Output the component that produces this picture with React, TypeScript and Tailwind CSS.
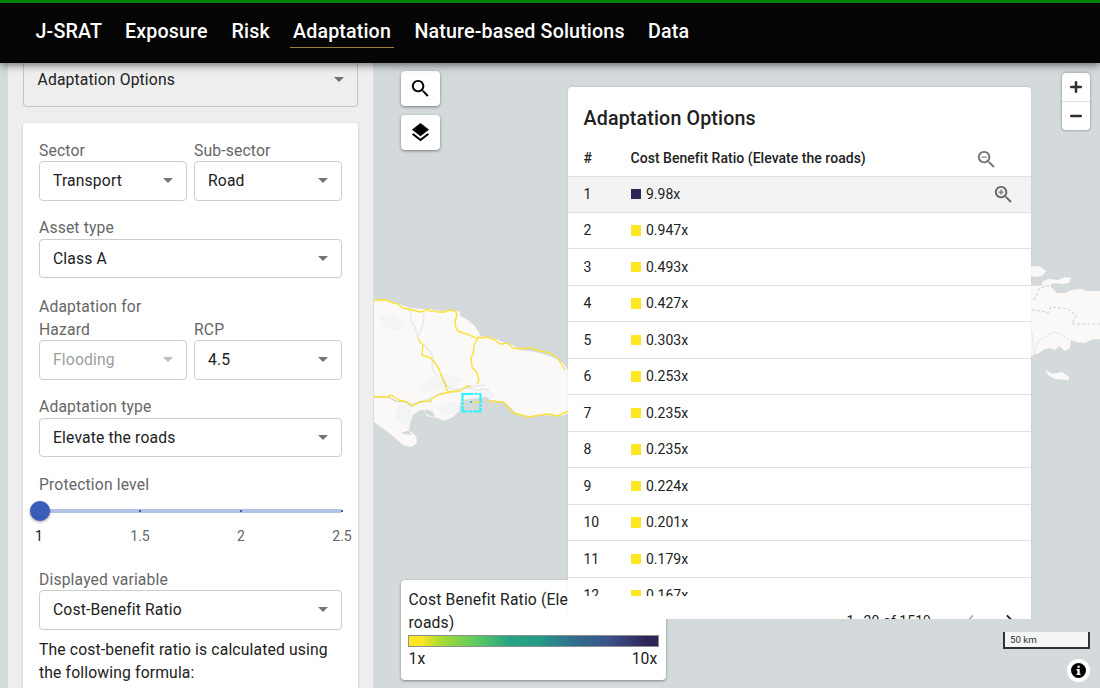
import React from 'react';

const NAV = [
  { label: 'J-SRAT', width: 'w-[66px]' },
  { label: 'Exposure', width: 'w-[83px]' },
  { label: 'Risk', width: 'w-[38px]' },
  { label: 'Adaptation', width: 'w-[98px]', active: true },
  { label: 'Nature-based Solutions', width: 'w-[210px]' },
  { label: 'Data', width: 'w-[41px]' },
];

const ROWS = ['9.98x', '0.947x', '0.493x', '0.427x', '0.303x', '0.253x', '0.235x', '0.235x', '0.224x', '0.201x', '0.179x', '0.167x'];

const ICONS = {
  search:
    'M15.5 14h-.79l-.28-.27C15.41 12.59 16 11.11 16 9.5 16 5.91 13.09 3 9.5 3S3 5.91 3 9.5 5.91 16 9.5 16c1.61 0 3.09-.59 4.23-1.57l.27.28v.79l5 4.99L20.49 19l-4.99-5zm-6 0C7.01 14 5 11.99 5 9.5S7.01 5 9.5 5 14 7.01 14 9.5 11.99 14 9.5 14z',
  layers:
    'M11.99 18.54l-7.37-5.73L3 14.07l9 7 9-7-1.63-1.27-7.38 5.74zM12 16l7.36-5.73L21 9l-9-7-9 7 1.63 1.27L12 16z',
  minus: 'M7 9h5v1H7z',
  plus: 'M12 10h-2v2H9v-2H7V9h2V7h1v2h2v1z',
  left: 'M15.41 7.41L14 6l-6 6 6 6 1.41-1.41L10.83 12z',
  right: 'M10 6L8.59 7.41 13.17 12l-4.58 4.59L10 18l6-6z',
};

function Icon({ d, extra, className }: { d: string; extra?: string; className: string }) {
  return (
    <svg viewBox="0 0 24 24" fill="currentColor" className={className}>
      <path d={d} />
      {extra && <path d={extra} stroke="currentColor" strokeWidth="0.300" />}
    </svg>
  );
}

function Caret({ className = '' }: { className?: string }) {
  return (
    <svg viewBox="0 0 10 5" fill="currentColor" className={`h-[5px] w-[10px] shrink-0 ${className}`}>
      <path d="M0 0h10L5 5z" />
    </svg>
  );
}

function Field({ label, value, disabled, className = '' }: { label: React.ReactNode; value: string; disabled?: boolean; className?: string }) {
  return (
    <div className={`flex flex-col ${className}`}>
      <div className="relative top-[0.500px] text-[#666]">{label}</div>
      <div className="flex h-[39.500px] items-center justify-between rounded border border-[#cdcdcd] pr-[13px] pl-[13px]">
        <span className={disabled ? 'text-[#9e9e9e]' : 'text-[#212121]'}>{value}</span>
        <Caret className={disabled ? 'text-[#bdbdbd]' : 'text-[#757575]'} />
      </div>
    </div>
  );
}

function MapCanvas() {
  return (
    <svg viewBox="0 63 1100 625" className="absolute inset-0 h-[625px] w-[1100px]" fill="none">
      <rect y="63" width="1100" height="625" fill="#d4dadc" />
      <path
        fill="#fbf9f8"
        d="M360 301L374 299.500L386 300L396 303L402 305L410 308L421 309L430 309L441 311L454 310L460 312L460 316L466 319L475 326L479 333L480 336L494 338L503 342L514 346L520 350L530 351L540 353L552 357L562 362L568 370L572 380L572 412L561 416L541 415L530 417L516 413L508 405L504 402L491 400L480 402L462 400L460 410L453 417L444 421L437 418L427 416L425 410L420 410L413 415L410 424L409 430L416 436L417 443L411 447L403 445L394 437L384 429L374 422L360 416Z"
      />
      <path fill="#f3f4f4" d="M381 316l12-1 11 8-1 7-8 1-13-7zM419 388l14-11 13-3 11 5 1 6-12 7-7-4-18 6zM445 380l9-4 10 2-5 5-12-1zM397 405l13-2 2 13-3 9-8-1-6-9zM435 407l15-6 11 3-5 9-12 3zM463 394l18-6 13 4-1 6-28 1z" />
      <path fill="#d4dadc" d="M426 409l7 3 2 5-5-1-4-3zM401 433l9-3 1 5-7-1zM461 400l26-3 3 3-8 3-18 8-5-1z" />
      <g stroke="#e7e9eb" strokeWidth="1.500">
        <path d="M410 309l1 12 4 6 3 10M424 313l-1 12-5 12M423 344l6 6 4 7-1 11 5 8M408 405l18-5 15-7 13-1 14-5 18-2M445 385l8 5 16-2 8 2 12-1" />
      </g>
      <g stroke="#d2cda8" strokeWidth="1.100">
        <path d="M374 397l14 0 8 4 10 1 6 4 8-4 12-1M440 373l7 14" />
      </g>
      <g stroke="#fae13a" strokeWidth="1.400" strokeLinejoin="round">
        <path d="M373 301l6-1 7 0 8 3 4 1 5 4 9 2 9 2 3-1 2-2 4 2 5 0 3 1 7 0 4-2 6 1 2 3-2 8 1 6 2 3 5 2 4 1 7 3 3 2 2-2 3 1 5-1 8 3 5 4 2 0 5-1 6 5 10 1 5-1 5 0 6 3 6 1 5 1 7 4 3 5 5 8" />
        <path d="M478 337l-4 9-1 8-2 4 1 9 5 6 2 7-2 4" />
        <path d="M418 338l2 4 3 3-1 10 9 3 4 5 4 6 4 11 4 10 3 3" />
        <path d="M373 396l6 1 8 0 4-2 8 5 8 2 6 4 6-4 10-1 9-6 12-3 10-1 7-5 4 0M488 401l15 1 5 5 5 6 9 2 6 2 13-2 8-1 9 2 10-5M473 402l9 0" />
      </g>
      <rect x="462.500" y="394" width="18" height="17.500" stroke="#2ef3fb" strokeWidth="2.200" strokeDasharray="11 1 3 1" />
      <rect x="470" y="401" width="2" height="2" fill="#31c8ef" />
      <g fill="#fbf9f8">
        <path d="M1025 267l14-1 7 5-4 5-8 1-9-3zM1042 282l6-3 10 1 7-3 6 1-2 5-8 1-6-1-7 2-6 0zM1020 284l15 2 15-1 4 5 2 3 9 0 7-3 9-1 7 2 12 0v48l-9 1-6 3-9-1-5-2-1 8-5 3-6-5-4 4-6-2-6 2-4 3-6 2-8 6H1020z" />
        <path d="M1045 370l8 4 9-2 3 2 4 3v3l-14-1-7-4z" />
      </g>
      <g stroke="#d1d4d7" strokeWidth="1.200" strokeDasharray="3 2">
        <path d="M1034 300l5-11 8-3 6 2M1032 310l10 1 6 2 3-6 17 2 8 7-4 8 28 0" />
      </g>
      <path stroke="#e4e6e8" d="M1032 333l2 21 4-13 9-5 7-4 9 3 6 6" />
    </svg>
  );
}

function Sidebar() {
  return (
    <aside className="relative ml-[7px] flex h-full w-[367px] shrink-0 flex-col overflow-hidden border-x border-[#dcdcdc] bg-[#eee] pr-[15px] pl-[15px] text-[15.7px] leading-[23px] tracking-[0.15px]">
      <div className="flex h-[44px] shrink-0 items-start justify-between rounded-b border border-t-0 border-[#c6c6c6] pr-[13px] pl-[13.500px] pt-[5px] text-[#212121]">
        <span>Adaptation Options</span>
        <Caret className="mt-[9px] text-[#6f6f6f]" />
      </div>
      <div className="mt-[16px] flex shrink-0 flex-col rounded-t bg-white px-4 pt-[15px] pb-10 shadow-[0_1px_3px_rgba(0,0,0,0.2)]">
        <div className="flex gap-[7px]">
          <Field label="Sector" value="Transport" className="w-[148px]" />
          <Field label="Sub-sector" value="Road" className="w-[148px]" />
        </div>
        <Field label="Asset type" value="Class A" className="mt-[15px]" />
        <div className="mt-[16px] flex items-end gap-[7px]">
          <Field label={<>Adaptation for<br />Hazard</>} value="Flooding" disabled className="w-[148px]" />
          <Field label="RCP" value="4.5" className="w-[148px]" />
        </div>
        <Field label="Adaptation type" value="Elevate the roads" className="mt-[15px]" />
        <div className="mt-[15.500px] text-[#666]">Protection level</div>
        <div className="relative mt-[13px] h-1 rounded-sm bg-[#b1c2e5]">
          <i className="absolute top-[1px] left-[100px] h-[2px] w-[2px] bg-[#3a5bb8]" />
          <i className="absolute top-[1px] left-[201px] h-[2px] w-[2px] bg-[#3a5bb8]" />
          <i className="absolute top-[1px] left-[302px] h-[2px] w-[2px] bg-[#3a5bb8]" />
          <i className="absolute -top-2 -left-[9.500px] h-5 w-5 rounded-full bg-[#3a5bb8] shadow-[0_1px_3px_rgba(0,0,0,0.4)]" />
        </div>
        <div className="-mx-[15px] mt-[12px] flex justify-between text-[14px] tracking-[0.03px] text-[#666]">
          <span className="w-[30px] text-center text-[#212121]">1</span>
          <span className="w-[30px] text-center">1.5</span>
          <span className="w-[30px] text-center">2</span>
          <span className="w-[30px] text-center">2.5</span>
        </div>
        <Field label="Displayed variable" value="Cost-Benefit Ratio" className="mt-[19.500px]" />
        <p className="mt-[8.500px] whitespace-nowrap text-[#212121]">
          The cost-benefit ratio is calculated using
          <br />
          the following formula:
        </p>
      </div>
    </aside>
  );
}

function OptionsPanel() {
  return (
    <section className="absolute top-6 left-[568px] flex h-[532px] w-[463px] flex-col overflow-hidden rounded-t bg-white text-[14px] text-[#212121] shadow-[0_-1px_2px_rgba(0,0,0,0.08)]">
      <h2 className="pt-[17.500px] pl-[15.500px] text-[19.65px] leading-[28px] font-medium tracking-[0.15px]">Adaptation Options</h2>
      <div className="mt-[7.500px] flex h-[36.500px] shrink-0 items-center border-b border-[#e0e0e0] pl-[15.500px] font-medium tracking-[0.03px]">
        <span className="relative top-[0.500px] w-[47px]">#</span>
        <span className="relative top-[0.500px] flex-1 whitespace-nowrap">Cost Benefit Ratio (Elevate the roads)</span>
        <Icon d={ICONS.search} extra={ICONS.minus} className="mt-[4px] mr-[33px] h-[23px] w-[23px] text-[#757575]" />
      </div>
      <div className="h-[419.500px] shrink-0 overflow-hidden">
        {ROWS.map((value, i) => (
          <div
            key={i}
            className={`flex h-[36.500px] items-center border-b border-[#e0e0e0] pl-[15.500px] ${i === 0 ? '-mt-[0.500px] bg-[#f3f3f3]' : ''}`}
          >
            <span className="relative top-[0.500px] w-[47.500px]">{i + 1}</span>
            <span className={`mr-[5px] h-[10.500px] w-[10px] ${i === 0 ? 'bg-[#2e2657]' : 'bg-[#fde725]'}`} />
            <span className="relative top-[0.500px] flex-1">{value}</span>
            {i === 0 && <Icon d={ICONS.search} extra={ICONS.plus} className="mt-[1px] mr-[16px] h-[23px] w-[23px] text-[#666]" />}
          </div>
        ))}
      </div>
      <div className="mt-[12px] flex shrink-0 items-start pl-[278.500px] leading-[26px]">
        <span className="w-[112px] whitespace-nowrap tracking-[0.03px]">1–20 of 1519</span>
        <Icon d={ICONS.left} className="mt-[1px] h-[23px] w-[23px] text-[#b5b5b5]" />
        <Icon d={ICONS.right} className="mt-[1px] ml-[16px] h-[23px] w-[23px]" />
      </div>
    </section>
  );
}

export default function App() {
  return (
    <div className="flex h-[688px] w-[1100px] flex-col overflow-hidden bg-[#d4dadc] font-['Roboto','Liberation_Sans',sans-serif]">
      <header className="z-20 flex h-[63px] shrink-0 items-start gap-[23.500px] border-t-[3px] border-[#008000] bg-[#050505] pt-[14px] pl-[35.500px] text-[19.65px] leading-[29px] font-medium tracking-[0.15px] text-white shadow-[0_2px_8px_rgba(0,0,0,0.55)]">
        {NAV.map((n) => (
          <a key={n.label} className={`relative whitespace-nowrap ${n.width}`}>
            {n.label}
            {n.active && <span className="absolute top-[30px] -left-[3px] h-px w-[104px] bg-[#9b7d3f]" />}
          </a>
        ))}
      </header>
      <main className="relative flex h-[625px] shrink-0">
        <MapCanvas />
        <Sidebar />
        <div className="relative mt-[7.500px] ml-[27px] flex w-[39px] flex-col gap-[9px]">
          <button className="flex h-[35px] w-[39px] items-center justify-center rounded bg-white shadow-[0_1px_3px_rgba(0,0,0,0.45)]">
            <Icon d={ICONS.search} className="h-[23px] w-[23px]" />
          </button>
          <button className="flex h-[35px] w-[39px] items-center justify-center rounded bg-white shadow-[0_1px_3px_rgba(0,0,0,0.45)]">
            <Icon d={ICONS.layers} className="h-[23px] w-[23px]" />
          </button>
        </div>
        <div className="absolute top-[517px] left-[400.500px] h-[100px] w-[265px] rounded bg-white px-2 pt-[8px] text-[15.7px] leading-[23px] tracking-[0.15px] text-[#212121] shadow-[0_1px_3px_rgba(0,0,0,0.4)]">
          <p className="whitespace-nowrap">
            Cost Benefit Ratio (Elevate the
            <br />
            roads)
          </p>
          <div className="mt-px -ml-px h-[12px] w-[251px] border border-[#8f8f8f] bg-[linear-gradient(90deg,#fde725_0%,#fde725_5%,#addc30_12%,#5ec962_27%,#28a482_40%,#259b87_52%,#2f718e_65%,#3b528b_80%,#35396f_89%,#2e2657_95%)]" />
          <div className="flex justify-between">
            <span>1x</span>
            <span>10x</span>
          </div>
        </div>
        <OptionsPanel />
        <div className="absolute top-[10px] right-[10px] flex w-[28px] flex-col rounded bg-white text-[#332b33] shadow-[0_0_0_1.5px_rgba(0,0,0,0.13)]">
          <button className="flex h-[28.500px] items-center justify-center border-b border-[#ddd]">
            <svg viewBox="0 0 12 12" className="h-3 w-3" fill="none" stroke="currentColor" strokeWidth="2.500" strokeLinecap="round">
              <path d="M6 1.200v9.600M1.200 6h9.600" />
            </svg>
          </button>
          <button className="flex h-[28.500px] items-center justify-center">
            <svg viewBox="0 0 12 12" className="h-3 w-3" fill="none" stroke="currentColor" strokeWidth="2.500" strokeLinecap="round">
              <path d="M1.200 6h9.600" />
            </svg>
          </button>
        </div>
        <div className="absolute top-[569px] right-[10px] h-[17px] w-[87px] border-2 border-t-0 border-[#333] bg-[#f4f5f5] pl-[5px] text-[9.700px] leading-[15px] text-[#333]">
          50 km
        </div>
        <div className="absolute top-[596px] right-[10px] flex h-[23px] w-[23px] items-center justify-center rounded-full bg-white">
          <svg viewBox="0 0 14 14" className="h-[15px] w-[15px]">
            <circle cx="7" cy="7" r="7" fill="#000" />
            <path fill="#fff" d="M6 2.500h2.100v2H6zM5.200 5.700h2.900V10H9v1.200H5.200V10H6V6.900h-.8z" />
          </svg>
        </div>
      </main>
    </div>
  );
}
